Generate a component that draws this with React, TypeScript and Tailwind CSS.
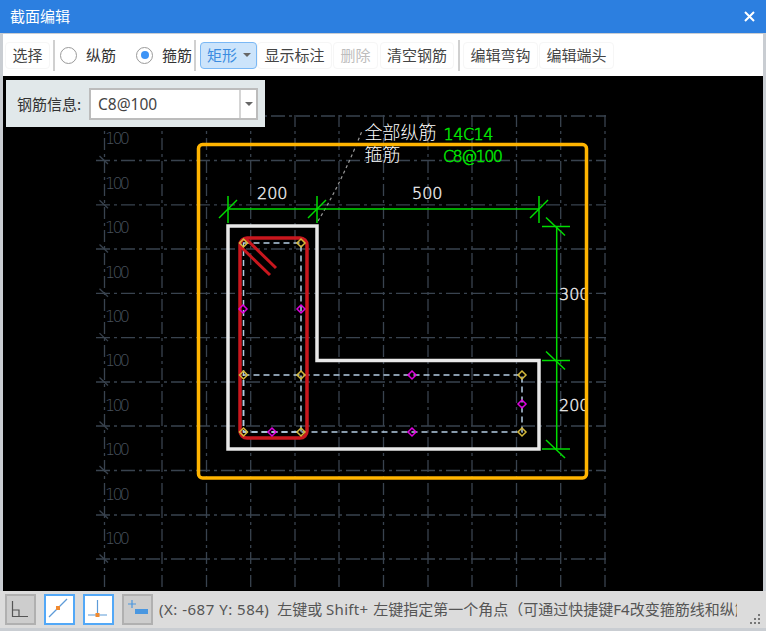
import React from 'react';

const CJK = { fontFamily: '"Noto Sans CJK SC", "Noto Sans", sans-serif' };

const gridY = [116, 160.5, 204.8, 249, 293.3, 337.6, 382, 426, 470.5, 515, 559];
const gridX = [104.5, 162, 206.5, 250.7, 295, 339, 383.5, 428, 472, 516.5, 560.7, 605];
const labelY = [138, 182.7, 227, 271.5, 316, 360, 404.5, 449, 493.5, 538];

const yellowPts = [[243.5, 243], [301, 243], [243.5, 375], [301, 375], [243.5, 432], [301, 432], [522, 375], [522, 432]];
const magentaPts = [[243, 309], [301, 309], [272, 432], [412, 375], [412, 432], [522, 404]];

const diamond = (x: number, y: number) => `M${x} ${y - 4} L${x + 4} ${y} L${x} ${y + 4} L${x - 4} ${y} Z`;

// y of canvas drawing = page y - 76, handled by the viewBox
const SectionDrawing = () => (
  <svg className="block w-full h-full" viewBox="3 76 760 515">
    <defs>
      <clipPath id="dim-clip">
        <rect x="3" y="76" width="583" height="515" />
      </clipPath>
    </defs>

    <g stroke="#39434f" strokeWidth="1.3" fill="none">
      {gridY.map((y) => (
        <line key={y} x1="96" y1={y} x2="606" y2={y} strokeDasharray="14 4 3 4" />
      ))}
      {gridX.map((x) => (
        <line key={x} x1={x} y1="115" x2={x} y2="591" strokeDasharray="12 4 3 4" />
      ))}
      {gridY.slice(1).map((y) => (
        <line key={y} x1="99.5" y1={y - 4.5} x2="108" y2={y + 3.5} />
      ))}
    </g>
    <g fill="#47505c" fontSize="16" fontWeight="200" fontFamily='"DejaVu Sans", sans-serif'>
      {labelY.map((y) => (
        <text key={y} x="105" y={y + 6} textLength="25">100</text>
      ))}
    </g>

    <path d="M318 221 Q337 190 355 148 L362 131" stroke="#999" strokeWidth="1.2" strokeDasharray="3 3" fill="none" />

    <path d="M228 226 H317 V360.5 H539 V449 H228 Z" stroke="#e8e8e8" strokeWidth="3.5" fill="none" />

    <g stroke="#b4cde2" strokeWidth="1.5" strokeDasharray="6 4" fill="none">
      <rect x="243.5" y="243" width="57.5" height="189" />
      <rect x="243.5" y="375" width="278.5" height="57" />
    </g>

    <rect x="240" y="238" width="67" height="200" rx="7" stroke="#c9171e" strokeWidth="3.5" fill="none" />
    <g stroke="#c9171e" strokeWidth="3">
      <line x1="241" y1="247" x2="270" y2="275" />
      <line x1="245" y1="238" x2="276" y2="268" />
    </g>

    {yellowPts.map(([x, y]) => (
      <path key={`${x}-${y}`} d={diamond(x, y)} stroke="#d4b83a" strokeWidth="1.5" fill="none" />
    ))}
    {magentaPts.map(([x, y]) => (
      <path key={`${x}-${y}`} d={diamond(x, y)} stroke="#e000e0" strokeWidth="1.5" fill="none" />
    ))}

    <g stroke="#00dd00" strokeWidth="1.5" fill="none">
      <line x1="228" y1="209" x2="539" y2="209" />
      {[228, 317, 539].map((x) => (
        <g key={x}>
          <line x1={x} y1="196" x2={x} y2="223" />
          <line x1={x - 9} y1="218" x2={x + 9} y2="200" />
        </g>
      ))}
      <line x1="556.7" y1="226.5" x2="556.7" y2="449" />
      {[226.5, 360.5, 449].map((y) => (
        <g key={y}>
          <line x1="542" y1={y} x2="570" y2={y} />
          <line x1="546" y1={y - 9} x2="565" y2={y + 9} />
        </g>
      ))}
    </g>

    <g fill="#eeeeee" stroke="#eeeeee" strokeWidth="0.4" fontSize="16" fontWeight="200" fontFamily='"DejaVu Sans", sans-serif'>
      <text x="257" y="199">200</text>
      <text x="412" y="199">500</text>
      <g clipPath="url(#dim-clip)">
        <text x="559" y="300">300</text>
        <text x="559" y="411">200</text>
      </g>
    </g>

    <text fill="#ffffff" fontSize="18" fontWeight="300" style={CJK}>
      <tspan x="364.5" y="139">全部纵筋</tspan>
      <tspan x="364.5" y="161">箍筋</tspan>
    </text>
    <g fill="#00e800" stroke="#00e800" strokeWidth="0.5" fontSize="16" fontWeight="200" fontFamily='"DejaVu Sans", sans-serif'>
      <text x="443.5" y="140" textLength="50">14C14</text>
      <text x="443" y="162" textLength="60">C8@100</text>
    </g>

    <rect x="198.5" y="144.5" width="388" height="333.5" rx="4" stroke="#ffb400" strokeWidth="3.5" fill="none" />
  </svg>
);

const ToolButton = ({ label, width, disabled }: { label: string; width: string; disabled?: boolean }) => (
  <div className={`h-[27px] ${width} flex items-center justify-center rounded border border-[#f6f6f6] ${disabled ? 'text-[#bdbdbd]' : 'text-[#444]'}`}>
    {label}
  </div>
);

const Separator = () => <div className="w-[2px] h-[31px] bg-[#d0d0d0]" />;

const Radio = ({ label, checked }: { label: string; checked?: boolean }) => (
  <div className="flex items-center gap-[9px] text-[#333]">
    <div className="w-[17px] h-[17px] rounded-full border-[1.5px] border-[#9a9a9a] flex items-center justify-center">
      {checked && <div className="w-[8px] h-[8px] rounded-full bg-[#3d94f6]" />}
    </div>
    <span>{label}</span>
  </div>
);

const Caret = () => <div className="w-0 h-0 border-x-[4px] border-x-transparent border-t-[4px] border-t-[#666]" />;

const StatusButton = ({ active, children }: { active?: boolean; children: React.ReactNode }) => (
  <div className={`w-[31px] h-[31px] border-2 ${active ? 'bg-white border-[#52a8f7]' : 'bg-[#cdcdcd] border-[#b0b0b0]'}`}>
    <svg width="27" height="27" viewBox="0 0 27 27" fill="none">{children}</svg>
  </div>
);

export default function App() {
  return (
    <div className="w-[766px] h-[631px] flex flex-col bg-[#c9cdd2] overflow-hidden" style={CJK}>
      <div className="h-[33px] shrink-0 bg-[#2c7fe0] flex items-center justify-between pl-[10px] pr-[11px] text-white text-[15px]">
        <span>截面编辑</span>
        <svg width="11" height="11" viewBox="0 0 11 11" stroke="white" strokeWidth="2">
          <path d="M1 1 L10 10 M10 1 L1 10" />
        </svg>
      </div>

      <div className="h-[42px] shrink-0 mt-[1px] mx-[3px] bg-white flex items-center pl-[2px] text-[15px]">
        <ToolButton label="选择" width="w-[45px]" />
        <div className="ml-[3px] mr-[5px]"><Separator /></div>
        <Radio label="纵筋" />
        <div className="ml-[20px]"><Radio label="箍筋" checked /></div>
        <div className="ml-[2px] mr-[4px]"><Separator /></div>
        <div className="h-[27px] w-[57px] flex items-center gap-[6px] pl-[6px] rounded bg-[#cce4fb] border border-[#7ab8f5] text-[#3b8ce0]">
          <span>矩形</span>
          <Caret />
        </div>
        <ToolButton label="显示标注" width="w-[75px]" />
        <div className="ml-[1px]"><ToolButton label="删除" width="w-[45px]" disabled /></div>
        <div className="ml-[2px] mr-[4px]"><ToolButton label="清空钢筋" width="w-[74px]" /></div>
        <Separator />
        <div className="ml-[3px]"><ToolButton label="编辑弯钩" width="w-[75px]" /></div>
        <div className="ml-[1px]"><ToolButton label="编辑端头" width="w-[75px]" /></div>
      </div>

      <div className="relative h-[515px] shrink-0 mx-[3px] bg-black">
        <SectionDrawing />
        <div className="absolute left-[3px] top-[4px] w-[259px] h-[47px] pt-[1px] bg-[#e1e8ea] flex items-center pl-[11px] gap-[8px] text-[15px] text-[#333]">
          <span className="w-[64px] whitespace-nowrap">钢筋信息:</span>
          <div className="w-[169px] h-[32px] flex bg-white border-2 border-[#bcbcbc]">
            <div className="flex-1 pl-[7px] pt-[1px] flex items-center text-[15.5px] text-[#444]" style={{ fontFamily: '"Noto Sans", sans-serif' }}>C8@100</div>
            <div className="w-[17px] border-l-2 border-[#d5d5d5] flex items-center justify-center"><Caret /></div>
          </div>
        </div>
      </div>

      <div className="relative h-[37px] shrink-0 bg-[#dcdcdc] flex items-center pl-[5px] text-[15px] text-[#555]">
        <div className="flex gap-[8px]">
          <StatusButton>
            <path d="M5.5 5 V20.5 H21 M5.5 14 H12 V20.5" stroke="#555" strokeWidth="1.2" />
          </StatusButton>
          <StatusButton active>
            <path d="M3 21 L21 3" stroke="#5d9bd8" strokeWidth="1.2" />
            <rect x="10" y="10" width="4" height="4" fill="#f08a30" />
          </StatusButton>
          <StatusButton active>
            <path d="M12.5 4 V19 M3 19 H22" stroke="#5d9bd8" strokeWidth="1.2" />
            <rect x="10.5" y="17" width="4" height="4" fill="#f08a30" />
          </StatusButton>
          <StatusButton>
            <path d="M8 4 V12 M4 8 H12" stroke="#4a97e0" strokeWidth="1.2" />
            <rect x="11" y="13" width="13" height="5" fill="#4a97e0" />
          </StatusButton>
        </div>
        <div className="ml-[6px] w-[578px] overflow-hidden whitespace-nowrap" style={{ fontFamily: '"Noto Sans", "Noto Sans CJK SC", sans-serif' }}>
          <span className="tracking-[0.5px]">(X: -687 Y: 584)</span>&nbsp;&nbsp;左键或 <span className="tracking-[0.3px] mr-[1px]">Shift+</span> 左键指定第一个角点（可通过快捷键F4改变箍筋线和纵筋
        </div>
        <svg className="absolute right-[5px] bottom-[3px]" width="11" height="11" viewBox="0 0 11 11" fill="#777">
          <rect x="8" y="0" width="2" height="2" />
          <rect x="4" y="4" width="2" height="2" />
          <rect x="8" y="4" width="2" height="2" />
          <rect x="0" y="8" width="2" height="2" />
          <rect x="4" y="8" width="2" height="2" />
          <rect x="8" y="8" width="2" height="2" />
        </svg>
      </div>
    </div>
  );
}
